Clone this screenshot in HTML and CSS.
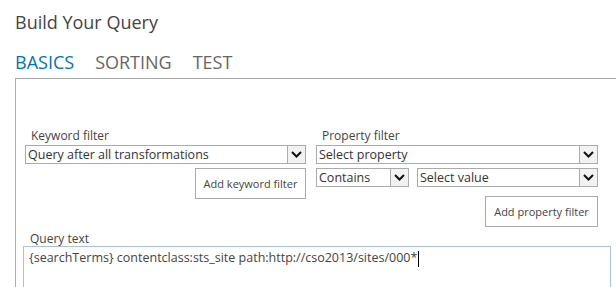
FILE: index.html
```html
<!DOCTYPE html>
<html lang="en">
<head>
    <meta charset="UTF-8">
    <title>Build Your Query</title>
    <link rel="stylesheet" href="styles.css">
</head>
<body>
    <h1 class="title">Build Your Query</h1>
    <div class="tabs">
        <span class="tab active">BASICS</span>
        <span class="tab">SORTING</span>
        <span class="tab">TEST</span>
    </div>
    <div class="panel">
        <div class="filters">
            <div class="col keyword">
                <div class="label">Keyword filter</div>
                <div class="select wide">
                    <span class="select-text">Query after all transformations</span>
                    <span class="arrow"><svg width="11" height="7" viewBox="0 0 11 7"><path d="M1 1 L5.5 5.5 L10 1" fill="none" stroke="#111" stroke-width="2"/></svg></span>
                </div>
                <div class="btn-row">
                    <button class="btn kw-btn">Add keyword filter</button>
                </div>
            </div>
            <div class="col property">
                <div class="label">Property filter</div>
                <div class="select wide">
                    <span class="select-text">Select property</span>
                    <span class="arrow"><svg width="11" height="7" viewBox="0 0 11 7"><path d="M1 1 L5.5 5.5 L10 1" fill="none" stroke="#111" stroke-width="2"/></svg></span>
                </div>
                <div class="select-row">
                    <div class="select op">
                        <span class="select-text">Contains</span>
                        <span class="arrow"><svg width="11" height="7" viewBox="0 0 11 7"><path d="M1 1 L5.5 5.5 L10 1" fill="none" stroke="#111" stroke-width="2"/></svg></span>
                    </div>
                    <div class="select value">
                        <span class="select-text">Select value</span>
                        <span class="arrow"><svg width="11" height="7" viewBox="0 0 11 7"><path d="M1 1 L5.5 5.5 L10 1" fill="none" stroke="#111" stroke-width="2"/></svg></span>
                    </div>
                </div>
                <div class="btn-row">
                    <button class="btn prop-btn">Add property filter</button>
                </div>
            </div>
        </div>
        <div class="query">
            <div class="label">Query text</div>
            <div class="query-box">{searchTerms} contentclass:sts_site path:http://cso2013/sites/000*<span class="caret"></span></div>
        </div>
    </div>
</body>
</html>
```

FILE: styles.css
```css
body {
    margin: 0;
    padding: 0;
    overflow: hidden;
    background-color: #fff;
    font-family: "Open Sans", "Noto Sans", sans-serif;
    color: #444;
}
.title {
    margin: 0;
    padding: 10px 0 0 15px;
    font-size: 18px;
    font-weight: 400;
    color: #444;
    line-height: 24px;
}
.tabs {
    display: flex;
    gap: 21px;
    padding: 16px 0 0 15px;
    height: 28px;
}
.tab {
    font-size: 18px;
    line-height: 24px;
    color: #666;
}
.tab.active {
    color: #0072c6;
}
.panel {
    margin-left: 15px;
    width: 601px;
    height: 209px;
    border-top: 1px solid #ababab;
    border-left: 1px solid #ababab;
    padding: 48px 0 0 6px;
    box-sizing: border-box;
    overflow: hidden;
}
.filters {
    display: flex;
    gap: 10px;
}
.col.keyword {
    width: 281px;
    padding-left: 3px;
}
.col.property {
    width: 282px;
}
.label {
    font-size: 12px;
    line-height: 18px;
    color: #444;
    padding-left: 6px;
}
.select {
    display: flex;
    align-items: stretch;
    height: 19px;
    border: 1px solid #ababab;
    box-sizing: border-box;
    background: #fff;
}
.select-text {
    flex: 1;
    font-size: 12.5px;
    line-height: 17px;
    color: #333;
    padding-left: 2px;
    white-space: nowrap;
    overflow: hidden;
}
.arrow {
    width: 17px;
    display: flex;
    align-items: center;
    justify-content: center;
    background: #f2f2f2;
    border-left: 1px solid #ababab;
}
.select-row {
    display: flex;
    gap: 8px;
    margin-top: 4px;
}
.select.op {
    width: 93px;
}
.select.value {
    flex: 1;
}
.btn-row {
    display: flex;
    justify-content: flex-end;
}
.btn {
    font-family: "Open Sans", "Noto Sans", sans-serif;
    font-size: 11px;
    color: #444;
    background: #fff;
    border: 1px solid #ababab;
    height: 31px;
    padding: 0;
    white-space: nowrap;
}
.kw-btn {
    margin-top: 4px;
    width: 111px;
}
.prop-btn {
    margin-top: 9px;
    width: 113px;
}
.query {
    margin-top: 4px;
    padding-left: 1px;
}
.query .label {
    padding-left: 7px;
    line-height: 15px;
}
.query-box {
    width: 588px;
    height: 46px;
    border: 1px solid #a5c3de;
    border-bottom: none;
    box-sizing: border-box;
    font-size: 12.5px;
    line-height: 18px;
    padding: 2px 5px;
    color: #444;
    white-space: nowrap;
}
.caret {
    display: inline-block;
    width: 1px;
    height: 16px;
    background: #000;
    vertical-align: middle;
    margin-left: 1px;
}
```
